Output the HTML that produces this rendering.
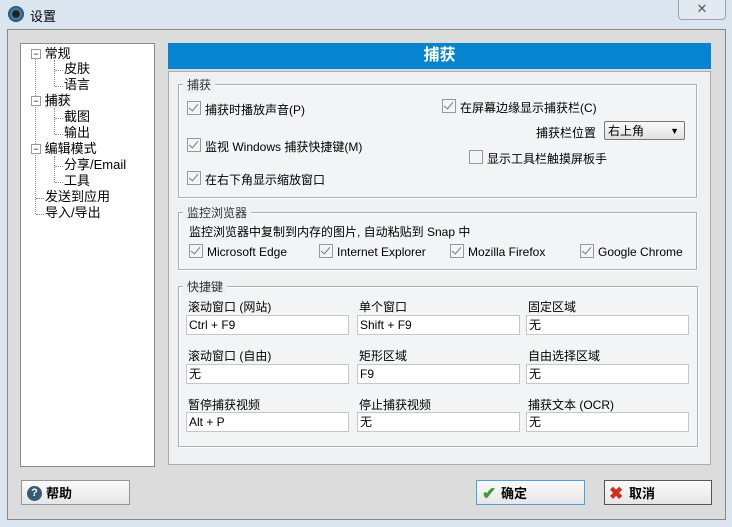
<!DOCTYPE html><html><head><meta charset="utf-8"><style>
body{margin:0;width:732px;height:527px;overflow:hidden;background:#dbe5f0;font-family:"Liberation Sans","Noto Sans CJK SC",sans-serif;font-size:12px;color:#000;position:relative}
.a{position:absolute;white-space:nowrap}
.cb{position:absolute;width:12px;height:12px;border:1px solid #8f9aa5;background:#f4f4f4}
.cb.c::after{content:"";position:absolute;left:3px;top:0px;width:4px;height:8px;border:solid #6a7a88;border-width:0 1.5px 1.5px 0;transform:rotate(40deg)}
.grp{position:absolute;border:1px solid #a9b1b8;box-shadow:inset 1px 1px 0 #fff,1px 1px 0 #fff;background:#f3f4f5}
.lg{position:absolute;background:#eef0f2;padding:0 4px;top:-9px;left:4px;color:#333}
.in{position:absolute;border:1px solid #c4c8cc;background:#fff;line-height:18px;padding-left:2px;box-sizing:border-box;height:20px;width:163px}
.btn{position:absolute;height:25px;border:1px solid #8a96a0;background:linear-gradient(#fafafa,#e6e6e6);font-weight:bold;font-size:13px;line-height:25px;box-sizing:border-box}
.t{position:absolute;font-size:12px;white-space:nowrap}
.dl{position:absolute;border-left:1px dotted #888}
.dh{position:absolute;border-top:1px dotted #888}
</style></head><body>
<div class="a" style="left:8px;top:6px;width:16px;height:16px;border-radius:50%;background:radial-gradient(circle,#222 30%,#4a8ab8 40%,#1c4a70 70%)"></div>
<div class="a" style="left:30px;top:6px;font-size:13px">设置</div>
<div class="a" style="left:678px;top:0;width:46px;height:19px;border:1px solid #9aa5b2;border-top:none;border-radius:0 0 4px 4px;background:#e3e9f0;text-align:center;font-size:13px;line-height:18px;color:#556">✕</div>
<div class="a" style="left:7px;top:29px;width:717px;height:489px;border:1px solid #888;background:#dcdcdc"></div>
<div class="a" style="left:20px;top:43px;width:133px;height:422px;border:1px solid #8a8a8a;background:#fff"></div>
<div class="dl" style="left:35px;top:58px;height:156px"></div>
<div class="dl" style="left:54px;top:60px;height:26px"></div>
<div class="dl" style="left:54px;top:108px;height:26px"></div>
<div class="dl" style="left:54px;top:156px;height:26px"></div>
<div class="dh" style="left:55px;top:70px;width:8px"></div><div class="dh" style="left:55px;top:86px;width:8px"></div>
<div class="dh" style="left:55px;top:118px;width:8px"></div><div class="dh" style="left:55px;top:134px;width:8px"></div>
<div class="dh" style="left:55px;top:166px;width:8px"></div><div class="dh" style="left:55px;top:182px;width:8px"></div>
<div class="dh" style="left:36px;top:198px;width:8px"></div><div class="dh" style="left:36px;top:214px;width:8px"></div>
<div class="a" style="left:31px;top:46px;line-height:16px;font-size:13px;width:120px;height:180px">
<div class="a" style="left:0;top:0"><span style="display:inline-block;width:8px;height:8px;border:1px solid #999;font-size:9px;line-height:8px;text-align:center;background:#fff;vertical-align:1px">−</span> 常规</div>
<div class="a" style="left:33px;top:15px">皮肤</div>
<div class="a" style="left:33px;top:31px">语言</div>
<div class="a" style="left:0;top:47px"><span style="display:inline-block;width:8px;height:8px;border:1px solid #999;font-size:9px;line-height:8px;text-align:center;background:#fff;vertical-align:1px">−</span> <span style="background:#eee">捕获</span></div>
<div class="a" style="left:33px;top:63px">截图</div>
<div class="a" style="left:33px;top:79px">输出</div>
<div class="a" style="left:0;top:95px"><span style="display:inline-block;width:8px;height:8px;border:1px solid #999;font-size:9px;line-height:8px;text-align:center;background:#fff;vertical-align:1px">−</span> 编辑模式</div>
<div class="a" style="left:33px;top:111px">分享/Email</div>
<div class="a" style="left:33px;top:127px">工具</div>
<div class="a" style="left:14px;top:143px">发送到应用</div>
<div class="a" style="left:14px;top:159px">导入/导出</div>
</div>
<div class="a" style="left:168px;top:43px;width:543px;height:26px;background:#0784cf;color:#fff;font-weight:bold;font-size:16px;text-align:center;line-height:26px">捕获</div>
<div class="a" style="left:168px;top:71px;width:541px;height:392px;border:1px solid #aab;background:#eef0f2"></div>
<div class="grp" style="left:178px;top:84px;width:517px;height:112px"><span class="lg">捕获</span></div>
<div class="cb c" style="left:187px;top:101px"></div><div class="t" style="left:205px;top:101px">捕获时播放声音(P)</div>
<div class="cb c" style="left:187px;top:138px"></div><div class="t" style="left:205px;top:138px">监视 Windows 捕获快捷键(M)</div>
<div class="cb c" style="left:187px;top:171px"></div><div class="t" style="left:205px;top:171px">在右下角显示缩放窗口</div>
<div class="cb c" style="left:442px;top:99px"></div><div class="t" style="left:460px;top:99px">在屏幕边缘显示捕获栏(C)</div>
<div class="t" style="left:536px;top:124px">捕获栏位置</div>
<div class="a" style="left:604px;top:121px;width:81px;height:19px;border:1px solid #777;border-radius:2px;background:linear-gradient(#fafafa,#e0e0e0);font-size:12px;line-height:19px;padding-left:3px;box-sizing:border-box">右上角<span style="position:absolute;right:5px;font-size:9px">▼</span></div>
<div class="cb" style="left:469px;top:150px"></div><div class="t" style="left:487px;top:150px">显示工具栏触摸屏板手</div>
<div class="grp" style="left:178px;top:212px;width:517px;height:56px"><span class="lg">监控浏览器</span></div>
<div class="t" style="left:189px;top:223px">监控浏览器中复制到内存的图片, 自动粘贴到 Snap 中</div>
<div class="cb c" style="left:189px;top:244px"></div><div class="a" style="left:207px;top:245px">Microsoft Edge</div>
<div class="cb c" style="left:319px;top:244px"></div><div class="a" style="left:337px;top:245px">Internet Explorer</div>
<div class="cb c" style="left:450px;top:244px"></div><div class="a" style="left:468px;top:245px">Mozilla Firefox</div>
<div class="cb c" style="left:580px;top:244px"></div><div class="a" style="left:598px;top:245px">Google Chrome</div>
<div class="grp" style="left:178px;top:286px;width:518px;height:159px"><span class="lg">快捷键</span></div>
<div class="t" style="left:188px;top:298px">滚动窗口 (网站)</div><div class="t" style="left:359px;top:298px">单个窗口</div><div class="t" style="left:528px;top:298px">固定区域</div>
<div class="in" style="left:186px;top:315px">Ctrl + F9</div><div class="in" style="left:357px;top:315px">Shift + F9</div><div class="in" style="left:526px;top:315px">无</div>
<div class="t" style="left:188px;top:347px">滚动窗口 (自由)</div><div class="t" style="left:359px;top:347px">矩形区域</div><div class="t" style="left:528px;top:347px">自由选择区域</div>
<div class="in" style="left:186px;top:364px">无</div><div class="in" style="left:357px;top:364px">F9</div><div class="in" style="left:526px;top:364px">无</div>
<div class="t" style="left:188px;top:396px">暂停捕获视频</div><div class="t" style="left:359px;top:396px">停止捕获视频</div><div class="t" style="left:528px;top:396px">捕获文本 (OCR)</div>
<div class="in" style="left:186px;top:412px">Alt + P</div><div class="in" style="left:357px;top:412px">无</div><div class="in" style="left:526px;top:412px">无</div>
<div class="btn" style="left:21px;top:480px;width:109px;padding-left:24px"><span class="a" style="left:5px;top:5px;width:15px;height:15px;border-radius:50%;background:#3a5a72;color:#fff;font-size:11px;line-height:15px;text-align:center">?</span>帮助</div>
<div class="btn" style="left:476px;top:480px;width:109px;padding-left:24px;border-color:#4aa3dd"><span class="a" style="left:5px;top:0;color:#3a9a3a;font-size:17px">✔</span>确定</div>
<div class="btn" style="left:604px;top:480px;width:108px;padding-left:24px;border-color:#555"><span class="a" style="left:4px;top:0;color:#d03020;font-size:17px">✖</span>取消</div>
</body></html>
